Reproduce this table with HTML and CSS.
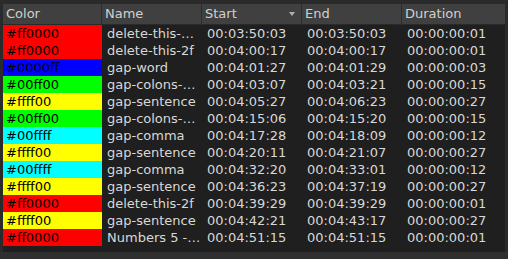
FILE: index.html
```html
<!DOCTYPE html>
<html>
<head>
<meta charset="utf-8">
<link rel="stylesheet" href="styles.css">
</head>
<body>
<div class="frame">
  <div class="table">
    <div class="hrow">
      <div class="hcell">Color</div>
      <div class="hcell">Name</div>
      <div class="hcell sorted">Start<span class="arrow"></span></div>
      <div class="hcell">End</div>
      <div class="hcell last">Duration</div>
    </div>
    <div class="body">
      <div class="row"><div class="c red">#ff0000</div><div class="c">delete-this-…</div><div class="c">00:03:50:03</div><div class="c">00:03:50:03</div><div class="c">00:00:00:01</div></div>
      <div class="row"><div class="c red">#ff0000</div><div class="c">delete-this-2f</div><div class="c">00:04:00:17</div><div class="c">00:04:00:17</div><div class="c">00:00:00:01</div></div>
      <div class="row"><div class="c blue">#0000ff</div><div class="c">gap-word</div><div class="c">00:04:01:27</div><div class="c">00:04:01:29</div><div class="c">00:00:00:03</div></div>
      <div class="row"><div class="c green">#00ff00</div><div class="c">gap-colons-…</div><div class="c">00:04:03:07</div><div class="c">00:04:03:21</div><div class="c">00:00:00:15</div></div>
      <div class="row"><div class="c yellow">#ffff00</div><div class="c">gap-sentence</div><div class="c">00:04:05:27</div><div class="c">00:04:06:23</div><div class="c">00:00:00:27</div></div>
      <div class="row"><div class="c green">#00ff00</div><div class="c">gap-colons-…</div><div class="c">00:04:15:06</div><div class="c">00:04:15:20</div><div class="c">00:00:00:15</div></div>
      <div class="row"><div class="c cyan">#00ffff</div><div class="c">gap-comma</div><div class="c">00:04:17:28</div><div class="c">00:04:18:09</div><div class="c">00:00:00:12</div></div>
      <div class="row"><div class="c yellow">#ffff00</div><div class="c">gap-sentence</div><div class="c">00:04:20:11</div><div class="c">00:04:21:07</div><div class="c">00:00:00:27</div></div>
      <div class="row"><div class="c cyan">#00ffff</div><div class="c">gap-comma</div><div class="c">00:04:32:20</div><div class="c">00:04:33:01</div><div class="c">00:00:00:12</div></div>
      <div class="row"><div class="c yellow">#ffff00</div><div class="c">gap-sentence</div><div class="c">00:04:36:23</div><div class="c">00:04:37:19</div><div class="c">00:00:00:27</div></div>
      <div class="row"><div class="c red">#ff0000</div><div class="c">delete-this-2f</div><div class="c">00:04:39:29</div><div class="c">00:04:39:29</div><div class="c">00:00:00:01</div></div>
      <div class="row"><div class="c yellow">#ffff00</div><div class="c">gap-sentence</div><div class="c">00:04:42:21</div><div class="c">00:04:43:17</div><div class="c">00:00:00:27</div></div>
      <div class="row"><div class="c red">#ff0000</div><div class="c">Numbers 5 -…</div><div class="c">00:04:51:15</div><div class="c">00:04:51:15</div><div class="c">00:00:00:01</div></div>
    </div>
  </div>
</div>
</body>
</html>
```
FILE: styles.css
```css
html, body {
  margin: 0;
  padding: 0;
  background: #2f2f2f;
  width: 508px;
  height: 259px;
  overflow: hidden;
}
.frame {
  padding: 4px 3px 0 3px;
  background: #2a2a2a;
  height: 248px;
}
.table {
  background: #1f1f1f;
  height: 248px;
  font-family: "DejaVu Sans", sans-serif;
  font-size: 13px;
  overflow: hidden;
}
.hrow, .row {
  display: grid;
  grid-template-columns: 99px 100px 100px 100px 1fr;
}
.hrow {
  height: 20px;
  background: #404040;
  border-bottom: 1px solid #2a2a2a;
}
.hcell {
  color: #d0d0d0;
  line-height: 20px;
  padding-left: 3px;
  border-right: 1px solid #2c2c2c;
  position: relative;
  white-space: nowrap;
}
.hcell.last { border-right: none; }
.arrow {
  position: absolute;
  right: 6px;
  top: 8px;
  width: 0;
  height: 0;
  border-left: 3px solid transparent;
  border-right: 3px solid transparent;
  border-top: 4px solid #b0b0b0;
}
.row {
  height: 17px;
}
.c {
  color: #d8d8d8;
  line-height: 17px;
  padding-left: 5px;
  white-space: nowrap;
  overflow: hidden;
}
.c.red, .c.blue, .c.green, .c.yellow, .c.cyan {
  color: #000;
  padding-left: 3px;
}
.red { background: #ff0000; }
.blue { background: #0000ff; }
.green { background: #00ff00; }
.yellow { background: #ffff00; }
.cyan { background: #00ffff; }
```
